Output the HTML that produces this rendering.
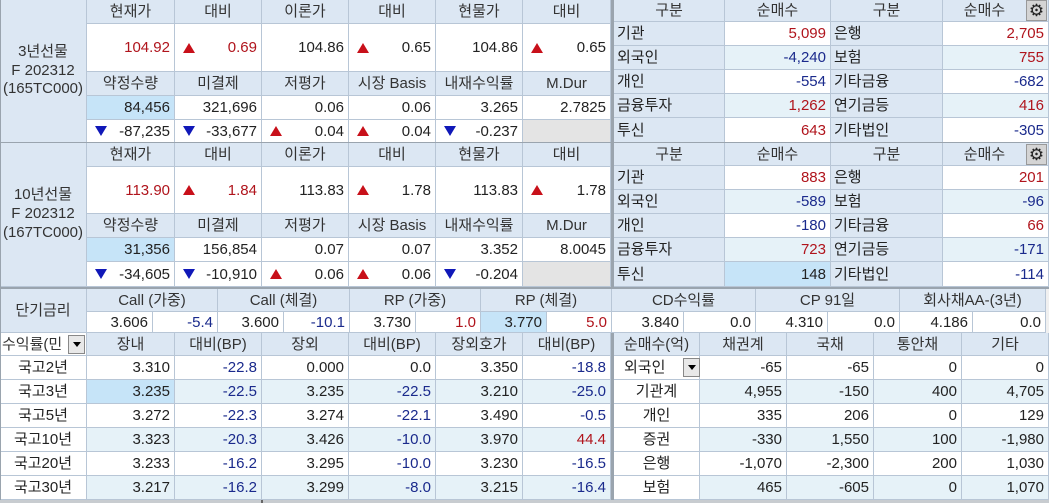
<!DOCTYPE html>
<html><head><meta charset="utf-8">
<style>
*{box-sizing:border-box;margin:0;padding:0}
body{width:1049px;height:503px;background:#f0f0f0;position:relative;overflow:hidden;font-family:"Liberation Sans","Noto Sans CJK KR",sans-serif;font-size:15px;color:#222}
.c{position:absolute;border-right:1px solid #b8c6d6;border-bottom:1px solid #b8c6d6;background:#fff;display:flex;align-items:center;justify-content:flex-end;padding-right:4px;white-space:nowrap;line-height:1}
.h{background:#dce7f3;justify-content:center;padding:0;color:#333}
.l{background:#dce7f3;justify-content:flex-start;padding-left:3px}
.m{justify-content:center;padding:0}
.a{background:#e6f2f8}
.s{background:#c6e4f8}
.g{background:#e4e4e4}
.r{color:#b0141c}
.b{color:#1a2a8c}
.up,.dn{position:absolute;left:8px;width:0;height:0;border-left:6px solid transparent;border-right:6px solid transparent}
.up{border-bottom:10px solid #c8101a}
.dn{border-top:10px solid #1018b8}
.sep{position:absolute;background:#9aa4ae}
.gear{position:absolute;width:21px;height:21px;background:#d4d4d4;border:1px solid #999;display:flex;align-items:center;justify-content:center;font-size:17px;color:#222}
.dd{position:absolute;width:17px;height:19px;background:#e8e8e8;border:1px solid #888;display:flex;align-items:center;justify-content:center}
.dd:after{content:"";border-left:4px solid transparent;border-right:4px solid transparent;border-top:5px solid #000}
</style></head><body>

<!-- Panel 1 -->
<div class="c h" style="left:0;top:0;width:87px;height:143px;line-height:1.25;text-align:center;flex-direction:column">3년선물<br>F 202312<br>(165TC000)</div>
<div class="c h" style="left:87px;top:0;width:88px;height:24px">현재가</div>
<div class="c h" style="left:175px;top:0;width:87px;height:24px">대비</div>
<div class="c h" style="left:262px;top:0;width:87px;height:24px">이론가</div>
<div class="c h" style="left:349px;top:0;width:87px;height:24px">대비</div>
<div class="c h" style="left:436px;top:0;width:87px;height:24px">현물가</div>
<div class="c h" style="left:523px;top:0;width:88px;height:24px">대비</div>
<div class="c r" style="left:87px;top:24px;width:88px;height:48px">104.92</div>
<div class="c r" style="left:175px;top:24px;width:87px;height:48px"><span class="up"></span>0.69</div>
<div class="c" style="left:262px;top:24px;width:87px;height:48px">104.86</div>
<div class="c" style="left:349px;top:24px;width:87px;height:48px"><span class="up"></span>0.65</div>
<div class="c" style="left:436px;top:24px;width:87px;height:48px">104.86</div>
<div class="c" style="left:523px;top:24px;width:88px;height:48px"><span class="up"></span>0.65</div>
<div class="c h" style="left:87px;top:72px;width:88px;height:24px">약정수량</div>
<div class="c h" style="left:175px;top:72px;width:87px;height:24px">미결제</div>
<div class="c h" style="left:262px;top:72px;width:87px;height:24px">저평가</div>
<div class="c h" style="left:349px;top:72px;width:87px;height:24px">시장 Basis</div>
<div class="c h" style="left:436px;top:72px;width:87px;height:24px">내재수익률</div>
<div class="c h" style="left:523px;top:72px;width:88px;height:24px">M.Dur</div>
<div class="c s" style="left:87px;top:96px;width:88px;height:24px">84,456</div>
<div class="c" style="left:175px;top:96px;width:87px;height:24px">321,696</div>
<div class="c" style="left:262px;top:96px;width:87px;height:24px">0.06</div>
<div class="c" style="left:349px;top:96px;width:87px;height:24px">0.06</div>
<div class="c" style="left:436px;top:96px;width:87px;height:24px">3.265</div>
<div class="c" style="left:523px;top:96px;width:88px;height:24px">2.7825</div>
<div class="c" style="left:87px;top:120px;width:88px;height:23px"><span class="dn"></span>-87,235</div>
<div class="c" style="left:175px;top:120px;width:87px;height:23px"><span class="dn"></span>-33,677</div>
<div class="c" style="left:262px;top:120px;width:87px;height:23px"><span class="up"></span>0.04</div>
<div class="c" style="left:349px;top:120px;width:87px;height:23px"><span class="up"></span>0.04</div>
<div class="c" style="left:436px;top:120px;width:87px;height:23px"><span class="dn"></span>-0.237</div>
<div class="c g" style="left:523px;top:120px;width:88px;height:23px"></div>

<!-- Panel 2 -->
<div class="c h" style="left:0;top:143px;width:87px;height:144px;line-height:1.25;text-align:center;flex-direction:column">10년선물<br>F 202312<br>(167TC000)</div>
<div class="c h" style="left:87px;top:143px;width:88px;height:24px">현재가</div>
<div class="c h" style="left:175px;top:143px;width:87px;height:24px">대비</div>
<div class="c h" style="left:262px;top:143px;width:87px;height:24px">이론가</div>
<div class="c h" style="left:349px;top:143px;width:87px;height:24px">대비</div>
<div class="c h" style="left:436px;top:143px;width:87px;height:24px">현물가</div>
<div class="c h" style="left:523px;top:143px;width:88px;height:24px">대비</div>
<div class="c r" style="left:87px;top:167px;width:88px;height:47px">113.90</div>
<div class="c r" style="left:175px;top:167px;width:87px;height:47px"><span class="up"></span>1.84</div>
<div class="c" style="left:262px;top:167px;width:87px;height:47px">113.83</div>
<div class="c" style="left:349px;top:167px;width:87px;height:47px"><span class="up"></span>1.78</div>
<div class="c" style="left:436px;top:167px;width:87px;height:47px">113.83</div>
<div class="c" style="left:523px;top:167px;width:88px;height:47px"><span class="up"></span>1.78</div>
<div class="c h" style="left:87px;top:214px;width:88px;height:24px">약정수량</div>
<div class="c h" style="left:175px;top:214px;width:87px;height:24px">미결제</div>
<div class="c h" style="left:262px;top:214px;width:87px;height:24px">저평가</div>
<div class="c h" style="left:349px;top:214px;width:87px;height:24px">시장 Basis</div>
<div class="c h" style="left:436px;top:214px;width:87px;height:24px">내재수익률</div>
<div class="c h" style="left:523px;top:214px;width:88px;height:24px">M.Dur</div>
<div class="c s" style="left:87px;top:238px;width:88px;height:24px">31,356</div>
<div class="c" style="left:175px;top:238px;width:87px;height:24px">156,854</div>
<div class="c" style="left:262px;top:238px;width:87px;height:24px">0.07</div>
<div class="c" style="left:349px;top:238px;width:87px;height:24px">0.07</div>
<div class="c" style="left:436px;top:238px;width:87px;height:24px">3.352</div>
<div class="c" style="left:523px;top:238px;width:88px;height:24px">8.0045</div>
<div class="c" style="left:87px;top:262px;width:88px;height:25px"><span class="dn"></span>-34,605</div>
<div class="c" style="left:175px;top:262px;width:87px;height:25px"><span class="dn"></span>-10,910</div>
<div class="c" style="left:262px;top:262px;width:87px;height:25px"><span class="up"></span>0.06</div>
<div class="c" style="left:349px;top:262px;width:87px;height:25px"><span class="up"></span>0.06</div>
<div class="c" style="left:436px;top:262px;width:87px;height:25px"><span class="dn"></span>-0.204</div>
<div class="c g" style="left:523px;top:262px;width:88px;height:25px"></div>

<!-- Right panel 1 -->
<div class="c h" style="left:614px;top:0;width:111px;height:22px">구분</div>
<div class="c h" style="left:725px;top:0;width:106px;height:22px">순매수</div>
<div class="c h" style="left:831px;top:0;width:112px;height:22px">구분</div>
<div class="c h" style="left:943px;top:0;width:106px;height:22px;padding-right:22px">순매수</div>
<div class="gear" style="left:1026px;top:0">⚙</div>
<div class="c l" style="left:614px;top:22px;width:111px;height:24px">기관</div>
<div class="c r" style="left:725px;top:22px;width:106px;height:24px">5,099</div>
<div class="c l" style="left:831px;top:22px;width:112px;height:24px">은행</div>
<div class="c r" style="left:943px;top:22px;width:106px;height:24px">2,705</div>
<div class="c l" style="left:614px;top:46px;width:111px;height:24px">외국인</div>
<div class="c a b" style="left:725px;top:46px;width:106px;height:24px">-4,240</div>
<div class="c l" style="left:831px;top:46px;width:112px;height:24px">보험</div>
<div class="c a r" style="left:943px;top:46px;width:106px;height:24px">755</div>
<div class="c l" style="left:614px;top:70px;width:111px;height:24px">개인</div>
<div class="c b" style="left:725px;top:70px;width:106px;height:24px">-554</div>
<div class="c l" style="left:831px;top:70px;width:112px;height:24px">기타금융</div>
<div class="c b" style="left:943px;top:70px;width:106px;height:24px">-682</div>
<div class="c l" style="left:614px;top:94px;width:111px;height:24px">금융투자</div>
<div class="c a r" style="left:725px;top:94px;width:106px;height:24px">1,262</div>
<div class="c l" style="left:831px;top:94px;width:112px;height:24px">연기금등</div>
<div class="c a r" style="left:943px;top:94px;width:106px;height:24px">416</div>
<div class="c l" style="left:614px;top:118px;width:111px;height:25px">투신</div>
<div class="c r" style="left:725px;top:118px;width:106px;height:25px">643</div>
<div class="c l" style="left:831px;top:118px;width:112px;height:25px">기타법인</div>
<div class="c b" style="left:943px;top:118px;width:106px;height:25px">-305</div>

<!-- Right panel 2 -->
<div class="c h" style="left:614px;top:143px;width:111px;height:23px">구분</div>
<div class="c h" style="left:725px;top:143px;width:106px;height:23px">순매수</div>
<div class="c h" style="left:831px;top:143px;width:112px;height:23px">구분</div>
<div class="c h" style="left:943px;top:143px;width:106px;height:23px;padding-right:22px">순매수</div>
<div class="gear" style="left:1026px;top:144px">⚙</div>
<div class="c l" style="left:614px;top:166px;width:111px;height:24px">기관</div>
<div class="c r" style="left:725px;top:166px;width:106px;height:24px">883</div>
<div class="c l" style="left:831px;top:166px;width:112px;height:24px">은행</div>
<div class="c r" style="left:943px;top:166px;width:106px;height:24px">201</div>
<div class="c l" style="left:614px;top:190px;width:111px;height:24px">외국인</div>
<div class="c a b" style="left:725px;top:190px;width:106px;height:24px">-589</div>
<div class="c l" style="left:831px;top:190px;width:112px;height:24px">보험</div>
<div class="c a b" style="left:943px;top:190px;width:106px;height:24px">-96</div>
<div class="c l" style="left:614px;top:214px;width:111px;height:24px">개인</div>
<div class="c b" style="left:725px;top:214px;width:106px;height:24px">-180</div>
<div class="c l" style="left:831px;top:214px;width:112px;height:24px">기타금융</div>
<div class="c r" style="left:943px;top:214px;width:106px;height:24px">66</div>
<div class="c l" style="left:614px;top:238px;width:111px;height:24px">금융투자</div>
<div class="c a r" style="left:725px;top:238px;width:106px;height:24px">723</div>
<div class="c l" style="left:831px;top:238px;width:112px;height:24px">연기금등</div>
<div class="c a b" style="left:943px;top:238px;width:106px;height:24px">-171</div>
<div class="c l" style="left:614px;top:262px;width:111px;height:25px">투신</div>
<div class="c s" style="left:725px;top:262px;width:106px;height:25px">148</div>
<div class="c l" style="left:831px;top:262px;width:112px;height:25px">기타법인</div>
<div class="c b" style="left:943px;top:262px;width:106px;height:25px">-114</div>

<!-- Short rate -->
<div class="c h" style="left:0;top:289px;width:87px;height:44px">단기금리</div>
<div class="c h" style="left:87px;top:289px;width:131px;height:23px">Call (가중)</div>
<div class="c h" style="left:218px;top:289px;width:132px;height:23px">Call (체결)</div>
<div class="c h" style="left:350px;top:289px;width:131px;height:23px">RP (가중)</div>
<div class="c h" style="left:481px;top:289px;width:131px;height:23px">RP (체결)</div>
<div class="c h" style="left:612px;top:289px;width:144px;height:23px">CD수익률</div>
<div class="c h" style="left:756px;top:289px;width:144px;height:23px">CP 91일</div>
<div class="c h" style="left:900px;top:289px;width:146px;height:23px">회사채AA-(3년)</div>
<div class="c" style="left:87px;top:312px;width:66px;height:21px">3.606</div>
<div class="c b" style="left:153px;top:312px;width:65px;height:21px">-5.4</div>
<div class="c" style="left:218px;top:312px;width:66px;height:21px">3.600</div>
<div class="c b" style="left:284px;top:312px;width:66px;height:21px">-10.1</div>
<div class="c" style="left:350px;top:312px;width:66px;height:21px">3.730</div>
<div class="c r" style="left:416px;top:312px;width:65px;height:21px">1.0</div>
<div class="c s" style="left:481px;top:312px;width:66px;height:21px">3.770</div>
<div class="c r" style="left:547px;top:312px;width:65px;height:21px">5.0</div>
<div class="c" style="left:612px;top:312px;width:72px;height:21px">3.840</div>
<div class="c" style="left:684px;top:312px;width:72px;height:21px">0.0</div>
<div class="c" style="left:756px;top:312px;width:72px;height:21px">4.310</div>
<div class="c" style="left:828px;top:312px;width:72px;height:21px">0.0</div>
<div class="c" style="left:900px;top:312px;width:73px;height:21px">4.186</div>
<div class="c" style="left:973px;top:312px;width:73px;height:21px">0.0</div>

<!-- Bottom left -->
<div class="c h" style="left:0;top:333px;width:87px;height:23px;justify-content:flex-start;padding-left:2px;background:#fff">수익률(민</div>
<div class="dd" style="left:68px;top:335px"></div>
<div class="c h" style="left:87px;top:333px;width:88px;height:23px">장내</div>
<div class="c h" style="left:175px;top:333px;width:87px;height:23px">대비(BP)</div>
<div class="c h" style="left:262px;top:333px;width:87px;height:23px">장외</div>
<div class="c h" style="left:349px;top:333px;width:87px;height:23px">대비(BP)</div>
<div class="c h" style="left:436px;top:333px;width:87px;height:23px">장외호가</div>
<div class="c h" style="left:523px;top:333px;width:88px;height:23px">대비(BP)</div>

<div class="c m" style="left:0;top:356px;width:87px;height:24px">국고2년</div>
<div class="c" style="left:87px;top:356px;width:88px;height:24px">3.310</div>
<div class="c b" style="left:175px;top:356px;width:87px;height:24px">-22.8</div>
<div class="c" style="left:262px;top:356px;width:87px;height:24px">0.000</div>
<div class="c" style="left:349px;top:356px;width:87px;height:24px">0.0</div>
<div class="c" style="left:436px;top:356px;width:87px;height:24px">3.350</div>
<div class="c b" style="left:523px;top:356px;width:88px;height:24px">-18.8</div>

<div class="c m" style="left:0;top:380px;width:87px;height:24px">국고3년</div>
<div class="c s" style="left:87px;top:380px;width:88px;height:24px">3.235</div>
<div class="c a b" style="left:175px;top:380px;width:87px;height:24px">-22.5</div>
<div class="c a" style="left:262px;top:380px;width:87px;height:24px">3.235</div>
<div class="c a b" style="left:349px;top:380px;width:87px;height:24px">-22.5</div>
<div class="c a" style="left:436px;top:380px;width:87px;height:24px">3.210</div>
<div class="c a b" style="left:523px;top:380px;width:88px;height:24px">-25.0</div>

<div class="c m" style="left:0;top:404px;width:87px;height:24px">국고5년</div>
<div class="c" style="left:87px;top:404px;width:88px;height:24px">3.272</div>
<div class="c b" style="left:175px;top:404px;width:87px;height:24px">-22.3</div>
<div class="c" style="left:262px;top:404px;width:87px;height:24px">3.274</div>
<div class="c b" style="left:349px;top:404px;width:87px;height:24px">-22.1</div>
<div class="c" style="left:436px;top:404px;width:87px;height:24px">3.490</div>
<div class="c b" style="left:523px;top:404px;width:88px;height:24px">-0.5</div>

<div class="c m" style="left:0;top:428px;width:87px;height:24px">국고10년</div>
<div class="c a" style="left:87px;top:428px;width:88px;height:24px">3.323</div>
<div class="c a b" style="left:175px;top:428px;width:87px;height:24px">-20.3</div>
<div class="c a" style="left:262px;top:428px;width:87px;height:24px">3.426</div>
<div class="c a b" style="left:349px;top:428px;width:87px;height:24px">-10.0</div>
<div class="c a" style="left:436px;top:428px;width:87px;height:24px">3.970</div>
<div class="c a r" style="left:523px;top:428px;width:88px;height:24px">44.4</div>

<div class="c m" style="left:0;top:452px;width:87px;height:24px">국고20년</div>
<div class="c" style="left:87px;top:452px;width:88px;height:24px">3.233</div>
<div class="c b" style="left:175px;top:452px;width:87px;height:24px">-16.2</div>
<div class="c" style="left:262px;top:452px;width:87px;height:24px">3.295</div>
<div class="c b" style="left:349px;top:452px;width:87px;height:24px">-10.0</div>
<div class="c" style="left:436px;top:452px;width:87px;height:24px">3.230</div>
<div class="c b" style="left:523px;top:452px;width:88px;height:24px">-16.5</div>

<div class="c m" style="left:0;top:476px;width:87px;height:24px">국고30년</div>
<div class="c a" style="left:87px;top:476px;width:88px;height:24px">3.217</div>
<div class="c a b" style="left:175px;top:476px;width:87px;height:24px">-16.2</div>
<div class="c a" style="left:262px;top:476px;width:87px;height:24px">3.299</div>
<div class="c a b" style="left:349px;top:476px;width:87px;height:24px">-8.0</div>
<div class="c a" style="left:436px;top:476px;width:87px;height:24px">3.215</div>
<div class="c a b" style="left:523px;top:476px;width:88px;height:24px">-16.4</div>

<!-- Bottom right -->
<div class="c h" style="left:614px;top:333px;width:86px;height:23px">순매수(억)</div>
<div class="c h" style="left:700px;top:333px;width:87px;height:23px">채권계</div>
<div class="c h" style="left:787px;top:333px;width:87px;height:23px">국채</div>
<div class="c h" style="left:874px;top:333px;width:88px;height:23px">통안채</div>
<div class="c h" style="left:962px;top:333px;width:87px;height:23px">기타</div>

<div class="c" style="left:614px;top:356px;width:86px;height:24px;justify-content:flex-start;padding-left:10px">외국인</div>
<div class="dd" style="left:683px;top:358px"></div>
<div class="c" style="left:700px;top:356px;width:87px;height:24px">-65</div>
<div class="c" style="left:787px;top:356px;width:87px;height:24px">-65</div>
<div class="c" style="left:874px;top:356px;width:88px;height:24px">0</div>
<div class="c" style="left:962px;top:356px;width:87px;height:24px">0</div>

<div class="c m" style="left:614px;top:380px;width:86px;height:24px">기관계</div>
<div class="c a" style="left:700px;top:380px;width:87px;height:24px">4,955</div>
<div class="c a" style="left:787px;top:380px;width:87px;height:24px">-150</div>
<div class="c a" style="left:874px;top:380px;width:88px;height:24px">400</div>
<div class="c a" style="left:962px;top:380px;width:87px;height:24px">4,705</div>

<div class="c m" style="left:614px;top:404px;width:86px;height:24px">개인</div>
<div class="c" style="left:700px;top:404px;width:87px;height:24px">335</div>
<div class="c" style="left:787px;top:404px;width:87px;height:24px">206</div>
<div class="c" style="left:874px;top:404px;width:88px;height:24px">0</div>
<div class="c" style="left:962px;top:404px;width:87px;height:24px">129</div>

<div class="c m" style="left:614px;top:428px;width:86px;height:24px">증권</div>
<div class="c a" style="left:700px;top:428px;width:87px;height:24px">-330</div>
<div class="c a" style="left:787px;top:428px;width:87px;height:24px">1,550</div>
<div class="c a" style="left:874px;top:428px;width:88px;height:24px">100</div>
<div class="c a" style="left:962px;top:428px;width:87px;height:24px">-1,980</div>

<div class="c m" style="left:614px;top:452px;width:86px;height:24px">은행</div>
<div class="c" style="left:700px;top:452px;width:87px;height:24px">-1,070</div>
<div class="c" style="left:787px;top:452px;width:87px;height:24px">-2,300</div>
<div class="c" style="left:874px;top:452px;width:88px;height:24px">200</div>
<div class="c" style="left:962px;top:452px;width:87px;height:24px">1,030</div>

<div class="c m" style="left:614px;top:476px;width:86px;height:24px">보험</div>
<div class="c a" style="left:700px;top:476px;width:87px;height:24px">465</div>
<div class="c a" style="left:787px;top:476px;width:87px;height:24px">-605</div>
<div class="c a" style="left:874px;top:476px;width:88px;height:24px">0</div>
<div class="c a" style="left:962px;top:476px;width:87px;height:24px">1,070</div>

<!-- separators -->
<div class="sep" style="left:611px;top:0;width:3px;height:287px"></div>
<div class="sep" style="left:0;top:142px;width:611px;height:1px"></div>
<div class="sep" style="left:614px;top:142px;width:435px;height:1px"></div>
<div class="sep" style="left:0;top:287px;width:1049px;height:2px"></div>
<div class="sep" style="left:611px;top:333px;width:3px;height:170px"></div>
<div class="sep" style="left:0;top:0;width:1px;height:503px"></div>
<div class="sep" style="left:0;top:500px;width:1049px;height:3px;background:#c8ccd0"></div>
<div class="sep" style="left:261px;top:500px;width:2px;height:3px;background:#666"></div>
</body></html>
